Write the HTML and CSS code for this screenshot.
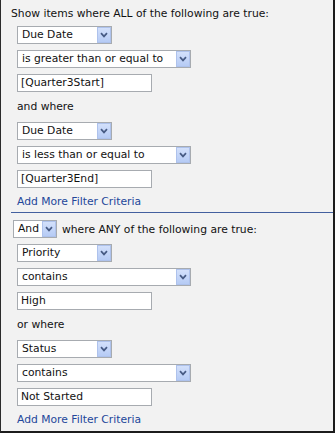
FILE: index.html
```html
<!DOCTYPE html>
<html lang="en">
<head>
<meta charset="UTF-8" />
<title>Filter Criteria</title>
<link rel="stylesheet" href="styles.css">
</head>
<body>
<div class="panel">
  <section class="block">
    <div class="caption">Show items where ALL of the following are true:</div>
    <div class="rows">
      <div class="dd dd-short"><span>Due Date</span><i class="btn"><svg viewBox="0 0 8 6" width="8" height="6"><path d="M1 1.2 L4 4.4 L7 1.2" /></svg></i></div>
      <div class="dd dd-wide"><span>is greater than or equal to</span><i class="btn"><svg viewBox="0 0 8 6" width="8" height="6"><path d="M1 1.2 L4 4.4 L7 1.2" /></svg></i></div>
      <div class="txt">[Quarter3Start]</div>
      <div class="joiner">and where</div>
      <div class="dd dd-short"><span>Due Date</span><i class="btn"><svg viewBox="0 0 8 6" width="8" height="6"><path d="M1 1.2 L4 4.4 L7 1.2" /></svg></i></div>
      <div class="dd dd-wide"><span>is less than or equal to</span><i class="btn"><svg viewBox="0 0 8 6" width="8" height="6"><path d="M1 1.2 L4 4.4 L7 1.2" /></svg></i></div>
      <div class="txt">[Quarter3End]</div>
      <a class="more" href="#">Add More Filter Criteria</a>
    </div>
  </section>

  <hr class="divider">

  <section class="block">
    <div class="caption-row">
      <div class="dd dd-and"><span>And</span><i class="btn"><svg viewBox="0 0 8 6" width="8" height="6"><path d="M1 1.2 L4 4.4 L7 1.2" /></svg></i></div>
      <span>where ANY of the following are true:</span>
    </div>
    <div class="rows">
      <div class="dd dd-short"><span>Priority</span><i class="btn"><svg viewBox="0 0 8 6" width="8" height="6"><path d="M1 1.2 L4 4.4 L7 1.2" /></svg></i></div>
      <div class="dd dd-wide"><span>contains</span><i class="btn"><svg viewBox="0 0 8 6" width="8" height="6"><path d="M1 1.2 L4 4.4 L7 1.2" /></svg></i></div>
      <div class="txt">High</div>
      <div class="joiner">or where</div>
      <div class="dd dd-short"><span>Status</span><i class="btn"><svg viewBox="0 0 8 6" width="8" height="6"><path d="M1 1.2 L4 4.4 L7 1.2" /></svg></i></div>
      <div class="dd dd-wide"><span>contains</span><i class="btn"><svg viewBox="0 0 8 6" width="8" height="6"><path d="M1 1.2 L4 4.4 L7 1.2" /></svg></i></div>
      <div class="txt">Not Started</div>
      <a class="more" href="#">Add More Filter Criteria</a>
    </div>
  </section>
</div>
</body>
</html>
```

FILE: styles.css
```css
:root {
  --panel-bg: #f2f2f2;
  --text-color: #111;
  --link-color: #23479a;
  --box-border: #a7abb0;
  --font-family: 'DejaVu Sans', Verdana, sans-serif;
}

* {
  box-sizing: border-box;
}

body {
  margin: 0;
  font-family: var(--font-family);
  font-size: 10.75px;
  color: var(--text-color);
  background: var(--panel-bg);
}

.panel {
  width: 335px;
  height: 433px;
  background: var(--panel-bg);
  border-left: 1px solid #2b2b2b;
  border-right: 2px solid #1c1c1c;
  border-bottom: 2px solid #1c1c1c;
  padding: 6px 0 0 10px;
}

.caption {
  line-height: 16px;
  margin-bottom: 4px;
}

.rows {
  display: flex;
  flex-direction: column;
  align-items: flex-start;
  gap: 6px;
  padding-left: 6px;
}

.dd,
.txt {
  height: 18px;
  background: #fff;
  border: 1px solid var(--box-border);
  line-height: 16px;
  padding-left: 4px;
}

.dd {
  display: flex;
  justify-content: space-between;
  align-items: center;
}

.dd-short {
  width: 95px;
}

.dd-wide {
  width: 174px;
}

.dd-and {
  width: 44px;
}

.txt {
  width: 135px;
  padding-left: 3px;
}

.btn {
  width: 14px;
  height: 16px;
  background: linear-gradient(#d3e0fb, #b6cbf5);
  border: 1px solid #aec2ec;
  display: flex;
  align-items: center;
  justify-content: center;
}

.btn svg path {
  fill: none;
  stroke: #475b84;
  stroke-width: 1.7;
}

.joiner {
  line-height: 18px;
}

.more {
  color: var(--link-color);
  text-decoration: none;
  line-height: 16px;
}

.divider {
  border: none;
  border-top: 1px solid #43609f;
  margin: 2px 0 7px 0;
}

.caption-row {
  display: flex;
  align-items: center;
  gap: 5px;
  margin: 0 0 6px 2px;
}
```
